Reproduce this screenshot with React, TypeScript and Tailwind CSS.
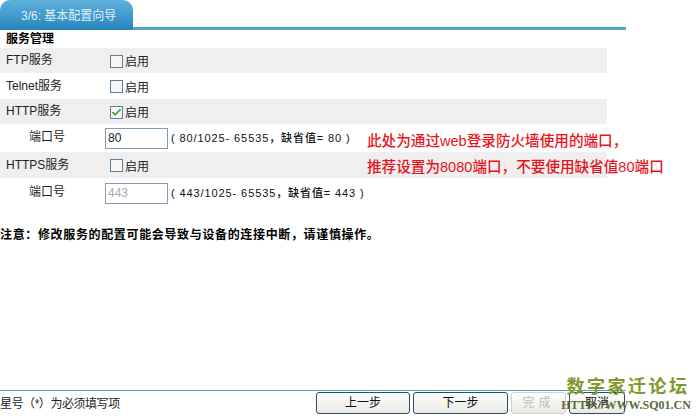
import React from 'react';
import { Check } from 'lucide-react';

const font = { fontFamily: '"Liberation Sans", "Noto Sans CJK SC", sans-serif' };

const CheckRow: React.FC<{ label: string; checked?: boolean; gray?: boolean; h: string }> = ({ label, checked, gray, h }) => (
  <div className={`flex items-center w-[607px] pl-[6px] ${h} ${gray ? 'bg-[#efefef]' : ''}`}>
    <span className="w-[104px] text-[12px] text-[#222] -mt-[1px]">{label}</span>
    <span className="w-[13px] h-[13px] mt-[1px] border border-[#5b7f9c] bg-[#f6f6f6] flex items-center justify-center">
      {checked && <Check size={11} strokeWidth={3.5} className="text-[#2f9e2f]" />}
    </span>
    <span className="ml-[2px] mt-[3px] text-[12px] text-[#222]">启用</span>
  </div>
);

const PortRow: React.FC<{ value: string; hint: string; disabled?: boolean; h: string }> = ({ value, hint, disabled, h }) => (
  <div className={`flex items-center w-[607px] ${h}`}>
    <span className="w-[105px] pl-[29px] text-[12px] text-[#222] -mt-[3px]">端口号</span>
    <div className={`w-[63px] h-[21px] border border-[#7f9db9] bg-white pl-[2px] text-[12px] leading-[19px] ${disabled ? 'text-[#aaa]' : 'text-[#222]'}`}>
      {value}
    </div>
    <span className="ml-[3px] mt-[1px] text-[11px] tracking-[0.9px] text-[#111] font-medium">{hint}</span>
  </div>
);

const FooterButton: React.FC<{ label: string; w: string; disabled?: boolean }> = ({ label, w, disabled }) => (
  <button
    className={`${w} h-[22px] rounded-[3px] border text-[12px] bg-gradient-to-b from-white to-[#e9e9e4] ${
      disabled ? 'border-[#d2d2cc] text-[#bdbdb5] tracking-[4px]' : 'border-[#2f4b66] text-[#111]'
    }`}
  >
    {label}
  </button>
);

export default function App() {
  return (
    <div className="relative w-[700px] h-[420px] bg-white overflow-hidden flex flex-col" style={font}>
      <div className="flex items-end h-[30px]">
        <div className="w-[133px] h-[30px] rounded-t-[10px] bg-gradient-to-b from-[#5fb0dc] to-[#2585bd] text-[#dff0f8] text-[12px] flex items-center justify-start pl-[21px] pt-[1px] shrink-0">
          3/6: 基本配置向导
        </div>
        <div className="w-[493px] h-[3px] bg-[#4ba3c9]" />
      </div>

      <div className="h-[18px] pl-[6px] pt-[2px] text-[12px] leading-[15px] font-bold text-black">服务管理</div>
      <CheckRow label="FTP服务" gray h="h-[25px]" />
      <CheckRow label="Telnet服务" h="h-[26px]" />
      <CheckRow label="HTTP服务" checked gray h="h-[25px]" />
      <PortRow value="80" hint="( 80/1025- 65535，缺省值= 80 )" h="h-[28px]" />
      <CheckRow label="HTTPS服务" gray h="h-[26px]" />
      <PortRow value="443" disabled hint="( 443/1025- 65535，缺省值= 443 )" h="h-[30px]" />

      <div className="mt-[19px] text-[12px] leading-[16px] font-bold text-black tracking-[0.65px]">
        注意：修改服务的配置可能会导致与设备的连接中断，请谨慎操作。
      </div>

      <div className="mt-auto mb-[6px]">
        <div className="w-[626px] h-[1px] bg-[#45a5c4]" />
        <div className="flex items-center mt-[1px] w-[689px]">
          <span className="w-[316px] pt-[2px] text-[12px] tracking-[-0.45px] text-[#222]">星号（*）为必须填写项</span>
          <div className="flex gap-[3px]">
            <FooterButton label="上一步" w="w-[94px]" />
            <FooterButton label="下一步" w="w-[95px]" />
            <FooterButton label="完成" w="w-[55px]" disabled />
            <FooterButton label="取消" w="w-[56px]" />
          </div>
        </div>
      </div>

      {/* red note drawn on top of the screenshot */}
      <div className="absolute left-[367px] top-[128px] text-[14.6px] leading-[26px] font-medium text-[#e8141c] whitespace-nowrap">
        <div>此处为通过web登录防火墙使用的端口，</div>
        <div>推荐设置为8080端口，不要使用缺省值80端口</div>
      </div>

      {/* forum watermark */}
      <div className="absolute left-[562px] top-[377px] w-[128px] flex flex-col items-center">
        <span className="ml-[4px] text-[18px] leading-[21px] font-bold tracking-[2.5px] text-[#7f9a2a] whitespace-nowrap">数字家迁论坛</span>
        <span
          className="mt-[1px] text-[12px] leading-[13px] font-bold text-[#5c6b3a] whitespace-nowrap"
          style={{ fontFamily: '"Liberation Serif", serif' }}
        >
          HTTP://WWW.SQ01.CN
        </span>
      </div>
    </div>
  );
}
